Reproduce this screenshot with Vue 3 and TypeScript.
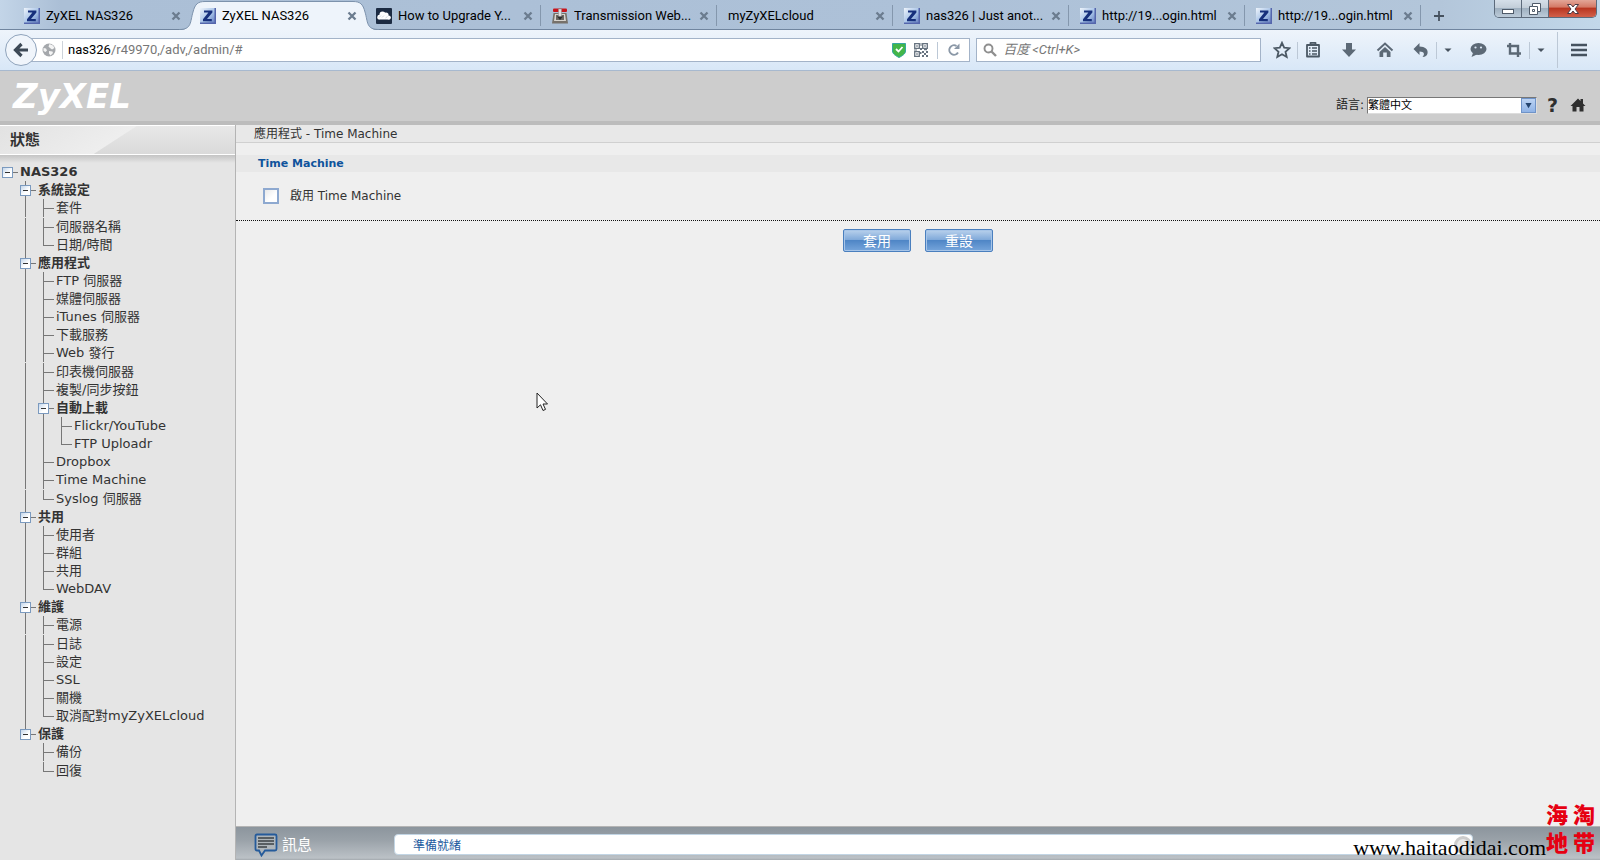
<script setup lang="ts">
import { ref } from 'vue'

interface Tab {
  title: string
  icon: 'z' | 'cloud' | 'transmission' | 'none'
  active?: boolean
}

interface TreeRow {
  label: string
  /** guide cells drawn before the label */
  cells: string[]
  spaced?: boolean
}

const tabs: Tab[] = [
  { title: 'ZyXEL NAS326', icon: 'z' },
  { title: 'ZyXEL NAS326', icon: 'z', active: true },
  { title: 'How to Upgrade Y...', icon: 'cloud' },
  { title: 'Transmission Web...', icon: 'transmission' },
  { title: 'myZyXELcloud', icon: 'none' },
  { title: 'nas326 | Just anot...', icon: 'z' },
  { title: 'http://19...ogin.html', icon: 'z' },
  { title: 'http://19...ogin.html', icon: 'z' },
]

const B = 'blank'
const V = 'line'
const T = 'tee'
const L = 'elbow'

const tree: TreeRow[] = [
  { label: 'NAS326', cells: ['box'] },
  { label: '系統設定', cells: [B, 'box through'] },
  { label: '套件', cells: [B, V, T] },
  { label: '伺服器名稱', cells: [B, V, T], spaced: true },
  { label: '日期/時間', cells: [B, V, L] },
  { label: '應用程式', cells: [B, 'box through'] },
  { label: 'FTP 伺服器', cells: [B, V, T] },
  { label: '媒體伺服器', cells: [B, V, T] },
  { label: 'iTunes 伺服器', cells: [B, V, T] },
  { label: '下載服務', cells: [B, V, T] },
  { label: 'Web 發行', cells: [B, V, T] },
  { label: '印表機伺服器', cells: [B, V, T], spaced: true },
  { label: '複製/同步按鈕', cells: [B, V, T] },
  { label: '自動上載', cells: [B, V, 'box through'] },
  { label: 'Flickr/YouTube', cells: [B, V, V, T] },
  { label: 'FTP Uploadr', cells: [B, V, V, L] },
  { label: 'Dropbox', cells: [B, V, T] },
  { label: 'Time Machine', cells: [B, V, T] },
  { label: 'Syslog 伺服器', cells: [B, V, L], spaced: true },
  { label: '共用', cells: [B, 'box through'] },
  { label: '使用者', cells: [B, V, T] },
  { label: '群組', cells: [B, V, T] },
  { label: '共用', cells: [B, V, T] },
  { label: 'WebDAV', cells: [B, V, L] },
  { label: '維護', cells: [B, 'box through'] },
  { label: '電源', cells: [B, V, T] },
  { label: '日誌', cells: [B, V, T], spaced: true },
  { label: '設定', cells: [B, V, T] },
  { label: 'SSL', cells: [B, V, T] },
  { label: '關機', cells: [B, V, T] },
  { label: '取消配對myZyXELcloud', cells: [B, V, L] },
  { label: '保護', cells: [B, 'box end'] },
  { label: '備份', cells: [B, B, T] },
  { label: '回復', cells: [B, B, L], spaced: true },
]

const isBranch = (row: TreeRow): boolean => row.cells[row.cells.length - 1].startsWith('box')

const address = ref('nas326/r49970,/adv,/admin/#')
const search = ref('')
const language = ref('zh-TW')
const enabled = ref(false)
</script>

<template>
  <div class="window">
    <header class="chrome">
      <div class="tabstrip">
        <div v-for="(tab, i) in tabs" :key="i" class="tab" :class="{ active: tab.active, ruled: i > 1 }">
          <svg v-if="tab.active" class="shape" viewBox="0 0 200 30" preserveAspectRatio="none" aria-hidden="true">
            <path d="M0 30C13 30 11 22 14 12C16 4 19 1.500 26 1.500H174C181 1.500 184 4 186 12C189 22 187 30 200 30Z" fill="#eef4fb" />
            <path d="M0 29.500C13 29.500 11 22 14 12C16 4 19 1.500 26 1.500H174C181 1.500 184 4 186 12C189 22 187 29.500 200 29.500" fill="none" stroke="#7c92ac" />
          </svg>
          <svg v-if="tab.icon === 'z'" class="favicon" viewBox="0 0 16 16" aria-hidden="true">
            <defs>
              <linearGradient :id="'z' + i" x1="0" y1="0" x2="1" y2="1">
                <stop offset="0" stop-color="#eef4fb" />
                <stop offset="0.550" stop-color="#a3c0e6" />
                <stop offset="1" stop-color="#5a70b8" />
              </linearGradient>
            </defs>
            <rect width="16" height="16" :fill="`url(#z${i})`" />
            <path d="M0 16V14.500H14.500V0H16V16Z" fill="#5566ac" />
            <path d="M4 2.400H12.400V4.400L7 11H11.800V13.200H3V11.200L8.400 4.600H4Z" fill="#17307c" />
          </svg>
          <svg v-else-if="tab.icon === 'cloud'" class="favicon" viewBox="0 0 16 16" aria-hidden="true">
            <rect width="16" height="16" rx="1" fill="#1c2b42" />
            <g fill="#fff"><circle cx="3.500" cy="9" r="2.200" /><circle cx="6.500" cy="6.500" r="3" /><circle cx="10" cy="7" r="2.600" /><circle cx="12.800" cy="9.500" r="1.900" /><rect x="1.500" y="8" width="13" height="3.500" rx="1.500" /></g>
            <path d="M3 9.500L5 7.500M6 9.500L8 7.500M9.500 10L11.500 8.500" stroke="#b3bfcb" stroke-width="0.600" />
          </svg>
          <svg v-else-if="tab.icon === 'transmission'" class="favicon" viewBox="0 0 16 16" aria-hidden="true">
            <path d="M1.500 5H14.500L16 15.500H0Z" fill="#77716a" />
            <path d="M3 6H13L14 13H2Z" fill="#d8d5cf" />
            <path d="M4 7H12V12H4Z" fill="#6c6862" />
            <rect x="1" y="0.500" width="14" height="3.500" rx="1" fill="#c8141b" />
            <path d="M6.500 1H9.500V9H6.500Z" fill="#dedede" stroke="#8b8b8b" stroke-width="0.500" />
            <path d="M5 8.500H11L8 12Z" fill="#2c2c2c" />
          </svg>
          <span class="tab-title">{{ tab.title }}</span>
          <button class="tab-close" type="button" :aria-label="'Close ' + tab.title">
            <svg viewBox="0 0 10 10" aria-hidden="true"><path d="M1.500 1.500L8.500 8.500M8.500 1.500L1.500 8.500" stroke="#6b7c8f" stroke-width="2.300" /></svg>
          </button>
        </div>
        <button class="new-tab" type="button" aria-label="New tab">
          <svg viewBox="0 0 12 12" aria-hidden="true"><path d="M6 1V11M1 6H11" stroke="#46525f" stroke-width="1.800" /></svg>
        </button>
        <div class="window-controls">
          <button type="button" class="win" aria-label="Minimize">
            <svg viewBox="0 0 14 14" aria-hidden="true"><rect x="1.500" y="7.500" width="11" height="4" fill="#fff" stroke="#4e5a69" /></svg>
          </button>
          <button type="button" class="win" aria-label="Restore">
            <svg viewBox="0 0 14 14" aria-hidden="true"><path d="M4.500 1.500H12.500V9.500H9.500V12.500H1.500V4.500H4.500Z" fill="#fff" stroke="#4e5a69" /><path d="M4.500 4.500H9.500V9.500M4.500 7.500H6.500V9.500H4.500Z" fill="none" stroke="#4e5a69" /></svg>
          </button>
          <button type="button" class="win close" aria-label="Close window">
            <svg viewBox="0 0 14 14" aria-hidden="true"><path d="M1.500 2.500H5L7 5L9 2.500H12.500L9 7L12.500 11.500H9L7 9L5 11.500H1.500L5 7Z" fill="#fff" stroke="#4c3a44" /></svg>
          </button>
        </div>
      </div>

      <div class="toolbar">
        <button class="back" type="button" aria-label="Back">
          <svg viewBox="0 0 16 16" aria-hidden="true"><path d="M8.500 2L2.500 8L8.500 14M2.500 8H15" fill="none" stroke="#3d4956" stroke-width="3.200" /></svg>
        </button>
        <div class="address">
          <svg class="globe" viewBox="0 0 14 14" aria-hidden="true">
            <circle cx="7" cy="7" r="6.500" fill="#a5a8ac" />
            <path d="M7.500 1L11 2.500L12.500 5L10 6.500L8 5L6.500 3.500ZM1.500 5L4 5.500L5 7.500L3.500 9L1.500 8ZM7 8L10.500 8.500L11 10L8.500 12.500L7 10.500Z" fill="#f4f4f4" />
          </svg>
          <div class="address-text">
            <span class="address-show" aria-hidden="true"><b>nas326</b>/r49970,/adv,/admin/#</span>
            <input v-model="address" class="address-input" type="text" aria-label="Address" />
          </div>
          <svg class="shield" viewBox="0 0 14 16" aria-hidden="true"><path d="M0.500 1.500H13.500V9C13.500 12 10 14 7 15.500C4 14 0.500 12 0.500 9Z" fill="#43b649" stroke="#35a7a2" /><path d="M4 7L6.500 9.500L10.500 5" fill="none" stroke="#fff" stroke-width="1.800" /></svg>
          <svg class="qr" viewBox="0 0 14 14" aria-hidden="true">
            <path d="M0.700 0.700H5.300V5.300H0.700ZM8.700 0.700H13.300V5.300H8.700ZM0.700 8.700H5.300V13.300H0.700Z" fill="none" stroke="#66727f" stroke-width="1.300" />
            <path d="M2.300 2.300h1.400v1.400H2.300ZM10.300 2.300h1.400v1.400h-1.400ZM2.300 10.300h1.400v1.400H2.300ZM6.500 0h1v3h-1ZM6 5h2v2H6ZM0 6.500h3v1H0ZM8 8h2v2H8ZM10 10h2v2h-2ZM12 8h2v2h-2ZM12 12h2v2h-2ZM8 12h2v2H8ZM6 9h1.500v2H6ZM10 6h3v1.300h-3Z" fill="#66727f" />
          </svg>
          <span class="bar-rule"></span>
          <button class="plain" type="button" aria-label="Reload">
            <svg viewBox="0 0 14 14" aria-hidden="true"><path d="M11 9.500A4.700 4.700 0 1 1 9.500 3" fill="none" stroke="#8b98a7" stroke-width="2" /><path d="M12.500 0.500V6H7Z" fill="#8b98a7" /></svg>
          </button>
        </div>
        <div class="search">
          <svg viewBox="0 0 14 14" aria-hidden="true"><circle cx="5.500" cy="5.500" r="4" fill="none" stroke="#8f8f8f" stroke-width="1.900" /><path d="M8.500 8.500L13 13" stroke="#8f8f8f" stroke-width="2.400" /></svg>
          <input v-model="search" type="text" aria-label="Search" placeholder="百度 <Ctrl+K>" />
        </div>
        <nav class="actions" aria-label="Browser tools">
          <button class="tool" type="button" aria-label="Bookmark">
            <svg viewBox="0 0 18 18" aria-hidden="true"><path d="M9 1.800L11.200 6.700L16.500 7.200L12.500 10.800L13.700 16L9 13.300L4.300 16L5.500 10.800L1.500 7.200L6.800 6.700Z" fill="none" stroke="#4b5864" stroke-width="1.800" /></svg>
          </button>
          <span class="bar-rule"></span>
          <button class="tool list" type="button" aria-label="Bookmarks list">
            <svg viewBox="0 0 18 18" aria-hidden="true"><path d="M3 4H15V15.500H3ZM6.500 4V1.800H11.500V4" fill="none" stroke="#4b5864" stroke-width="1.800" stroke-linejoin="round" /><path d="M5 7H6.500M8 7H13M5 10H6.500M8 10H13M5 13H6.500M8 13H13" stroke="#4b5864" stroke-width="1.500" /></svg>
          </button>
          <button class="tool down" type="button" aria-label="Downloads">
            <svg viewBox="0 0 18 18" aria-hidden="true"><path d="M6 2H12V8.500H16L9 16L2 8.500H6Z" fill="#5c6976" /></svg>
          </button>
          <button class="tool house" type="button" aria-label="Home">
            <svg viewBox="0 0 18 18" aria-hidden="true"><path d="M1.500 9.500L9 2.500L16.500 9.500" fill="none" stroke="#5c6976" stroke-width="2" /><path d="M9 6L14.500 11V16H10.800V11.500H7.200V16H3.500V11Z" fill="#5c6976" /></svg>
          </button>
          <button class="tool undo" type="button" aria-label="Undo">
            <svg viewBox="0 0 18 18" aria-hidden="true"><path d="M7.500 2V5.500C13 5.500 16.500 8.500 15.500 12.500C15 14.500 13.500 16 10.500 16C13 13.500 12.500 10.500 7.500 10.500V14L1.500 8Z" fill="#5c6976" /></svg>
          </button>
          <span class="bar-rule"></span>
          <button class="caret" type="button" aria-label="Undo history"><svg viewBox="0 0 8 8" aria-hidden="true"><path d="M0.500 2.500H7.500L4 6Z" fill="#46525f" /></svg></button>
          <button class="tool chat" type="button" aria-label="Chat">
            <svg viewBox="0 0 18 18" aria-hidden="true"><ellipse cx="9.500" cy="8" rx="8" ry="6" fill="#5c6976" /><path d="M4 12L2.500 16L9 13Z" fill="#5c6976" /><circle cx="6.500" cy="6.500" r="1.100" fill="#dce8f5" /><circle cx="12" cy="6.500" r="1.100" fill="#dce8f5" /></svg>
          </button>
          <button class="tool crop" type="button" aria-label="Screenshot">
            <svg viewBox="0 0 18 18" aria-hidden="true"><path d="M5 2V12.500H16M2 5H13V16" fill="none" stroke="#5c6976" stroke-width="2.400" /></svg>
          </button>
          <span class="bar-rule"></span>
          <button class="caret" type="button" aria-label="Screenshot options"><svg viewBox="0 0 8 8" aria-hidden="true"><path d="M0.500 2.500H7.500L4 6Z" fill="#46525f" /></svg></button>
          <span class="bar-rule tall"></span>
          <button class="tool menu" type="button" aria-label="Menu">
            <svg viewBox="0 0 18 18" aria-hidden="true"><path d="M1 4H17M1 9H17M1 14H17" stroke="#46525f" stroke-width="2.600" /></svg>
          </button>
        </nav>
      </div>
    </header>

    <div class="brandbar">
      <strong class="brand">ZyXEL</strong>
      <div class="brand-tools">
        <label for="lang">語言:</label>
        <span class="select">
          <select id="lang" v-model="language">
            <option value="zh-TW">繁體中文</option>
          </select>
          <span class="drop" aria-hidden="true"><svg viewBox="0 0 8 8"><path d="M0.500 1H7.500L4 7Z" fill="#24446f" /></svg></span>
        </span>
        <button class="plain help" type="button" aria-label="Help">?</button>
        <button class="plain home" type="button" aria-label="Home">
          <svg viewBox="0 0 16 14" aria-hidden="true"><path d="M8 0.500L10.500 3V1H13V5.500L15.500 8H13.500V13.500H9.500V9H6.500V13.500H2.500V8H0.500Z" fill="#2f2f2f" /></svg>
        </button>
      </div>
    </div>

    <div class="body">
      <aside class="sidebar">
        <h2 class="side-title">狀態</h2>
        <div class="side-shadow"></div>
        <ul class="tree">
          <li v-for="(row, i) in tree" :key="i" :class="{ spaced: row.spaced }">
            <template v-for="(cell, j) in row.cells" :key="j">
              <span v-if="cell.startsWith('box')" class="cell" :class="cell">
                <button type="button" class="toggle" :aria-label="'Collapse ' + row.label"></button>
              </span>
              <span v-else class="cell" :class="cell"></span>
            </template>
            <a href="#" :class="{ branch: isBranch(row) }">{{ row.label }}</a>
          </li>
        </ul>
      </aside>

      <div class="content">
        <h1 class="crumb">應用程式 - Time Machine</h1>
        <main class="panel">
          <h3 class="section">Time Machine</h3>
          <div class="option">
            <input id="enable" v-model="enabled" type="checkbox" />
            <label for="enable">啟用 Time Machine</label>
          </div>
          <div class="buttons">
            <button type="button">套用</button>
            <button type="button">重設</button>
          </div>
          <svg class="pointer" viewBox="0 0 12 20" aria-hidden="true"><path d="M1 1V16L4.500 12.800L7 18.500L9.500 17.400L7 12H11.500Z" fill="#fff" stroke="#222" /></svg>
        </main>
        <footer class="status">
          <svg class="bubble" viewBox="0 0 24 24" aria-hidden="true">
            <path d="M3 1.500H21Q22.500 1.500 22.500 3V16Q22.500 17.500 21 17.500H11L7.500 22.500L5 17.500H3Q1.500 17.500 1.500 16V3Q1.500 1.500 3 1.500Z" fill="#aeb5ba" stroke="#255b9b" stroke-width="1.800" />
            <path d="M4 5H20M4 8H20M4 11H20M4 14H13" stroke="#3d4145" stroke-width="1.400" />
          </svg>
          <span class="status-title">訊息</span>
          <output class="message">準備就緒<span class="spinner"></span></output>
        </footer>
      </div>
    </div>

    <div class="watermark">
      <span class="site">www.haitaodidai.com</span>
      <span class="seal"><span>海</span><span>淘</span><span>地</span><span>带</span></span>
    </div>
  </div>
</template>

<style>
html,
body,
#app {
  height: 100%;
}
</style>

<style scoped>
.window {
  position: relative;
  display: flex;
  flex-direction: column;
  min-height: 100%;
  overflow: hidden;
  background: #efefef;
  color: #333;
  font: 13px/18px 'DejaVu Sans', 'Noto Sans CJK TC', sans-serif;
}
* {
  box-sizing: border-box;
}
button,
input,
select {
  margin: 0;
  padding: 0;
  border: 0;
  background: none;
  color: inherit;
  font: inherit;
}
svg {
  display: block;
}

/* browser chrome */
.chrome {
  font: 13px/18px Roboto, 'Noto Sans CJK SC', sans-serif;
  color: #000;
}
.tabstrip {
  display: flex;
  align-items: stretch;
  height: 30px;
  padding-left: 14px;
  background: linear-gradient(90deg, #c3d5e8 0, #abbfd6 60px, #adc1d8 60%, #b3c6da 90%, #c2d8ea 100%);
  box-shadow: inset 0 -1px #70859f;
}
.tab {
  position: relative;
  display: flex;
  flex: 0 1 176px;
  align-items: center;
  gap: 6px;
  min-width: 0;
  padding: 1px 9px 0 10px;
}
.tab.ruled::before {
  content: '';
  position: absolute;
  top: 5px;
  right: 1px;
  width: 1px;
  height: 21px;
  background: #8497ad;
}
.shape {
  position: absolute;
  top: 0;
  left: -11px;
  width: 200px;
  height: 30px;
}
.favicon {
  position: relative;
  flex: none;
  width: 16px;
  height: 16px;
}
.tab-title {
  position: relative;
  flex: 1;
  overflow: hidden;
  white-space: nowrap;
}
.tab-close {
  position: relative;
  flex: none;
  width: 10px;
  height: 10px;
}
.new-tab {
  width: 12px;
  height: 12px;
  margin: 10px 0 0 11px;
}
.window-controls {
  display: flex;
  height: 18px;
  margin-left: auto;
  margin-right: 3px;
  overflow: hidden;
  border: 1px solid #5c6a7b;
  border-top: 0;
  border-radius: 0 0 5px 5px;
}
.win {
  display: grid;
  place-items: center;
  width: 27px;
  border-right: 1px solid #5c6a7b;
  background: linear-gradient(#d5dfe9 0, #c3ced9 45%, #9fb0c0 50%, #bccbd9 100%);
}
.win svg {
  width: 14px;
  height: 14px;
}
.win.close {
  width: 47px;
  border-right: 0;
  background: linear-gradient(#e3a698 0, #d57b68 40%, #b93722 50%, #d2604a 100%);
}
.toolbar {
  display: flex;
  align-items: center;
  height: 41px;
  padding: 0 12px 0 5px;
  border-bottom: 1px solid #a7b9cf;
  background: linear-gradient(#eef4fb, #d8e7f7);
}
.back {
  position: relative;
  display: grid;
  place-items: center;
  flex: none;
  width: 32px;
  height: 32px;
  border: 1px solid #8fa3bb;
  border-radius: 50%;
  background: #f0f5fb;
}
.back svg {
  width: 16px;
  height: 16px;
}
.address,
.search {
  display: flex;
  align-items: center;
  height: 24px;
  border: 1px solid #a3b3c8;
  background: #fff;
}
.address {
  flex: 943 1 0;
  margin-left: -6px;
  padding: 0 8px 0 10px;
}
.globe {
  width: 14px;
  height: 14px;
}
.address-text {
  position: relative;
  flex: 1;
  height: 18px;
  margin-left: 6px;
  padding-left: 5px;
  border-left: 1px solid #cdd3da;
}
.address-show {
  color: #777;
  pointer-events: none;
}
.address-show b {
  color: #000;
  font-weight: 400;
}
.address-input {
  position: absolute;
  inset: 0;
  width: 100%;
  padding-left: 5px;
  color: transparent;
  caret-color: #000;
}
.shield {
  width: 14px;
  height: 16px;
}
.qr {
  width: 14px;
  height: 14px;
  margin: 0 9px 0 8px;
}
.bar-rule {
  flex: none;
  width: 1px;
  height: 17px;
  background: #bcc8d6;
}
.bar-rule.tall {
  height: 36px;
}
.plain {
  flex: none;
}
.address .plain {
  width: 14px;
  height: 14px;
  margin-left: 9px;
}
.search {
  flex: 284 1 0;
  gap: 6px;
  margin-left: 6px;
  padding-left: 6px;
}
.search svg {
  flex: none;
  width: 14px;
  height: 14px;
}
.search input {
  flex: 1;
  min-width: 0;
  font-style: italic;
}
.search input::placeholder {
  color: #777;
  opacity: 1;
}
.actions {
  display: flex;
  align-items: center;
  margin-left: 12px;
}
.tool,
.tool svg {
  flex: none;
  width: 18px;
  height: 18px;
}
.actions .list {
  margin-left: 6px;
}
.actions .bar-rule {
  margin-left: 6px;
}
.actions .down,
.actions .house,
.actions .undo {
  margin-left: 18px;
}
.caret {
  width: 8px;
  height: 8px;
  margin-left: 7px;
}
.actions .chat {
  margin-left: 17px;
}
.actions .crop {
  margin-left: 18px;
}
.actions .tall {
  margin-left: 12px;
}
.actions .menu {
  margin-left: 12px;
}

/* device header */
.brandbar {
  display: flex;
  justify-content: space-between;
  height: 54px;
  padding: 0 14px 0 13px;
  border-bottom: 4px solid #bcbcbc;
  background: #cdcdcd;
}
.brand {
  color: #fff;
  font: italic 700 34px/50px 'DejaVu Sans', sans-serif;
}
.brand-tools {
  display: flex;
  align-items: center;
  padding-top: 18px;
  color: #222;
  font-size: 12px;
}
.select {
  position: relative;
  width: 170px;
  height: 17px;
  margin-left: 3px;
  border: 1px solid #777;
  border-right-color: #ddd;
  border-bottom-color: #ddd;
  background: #fff;
}
.select select {
  display: block;
  width: 100%;
  height: 15px;
  appearance: none;
  color: #000;
  font-size: 11px;
  line-height: 15px;
}
.drop {
  position: absolute;
  top: 0;
  right: 0;
  display: grid;
  place-items: center;
  width: 15px;
  height: 15px;
  border: 1px solid #6f93c8;
  background: linear-gradient(#bcd3f3, #8fb3e6);
  pointer-events: none;
}
.drop svg {
  width: 7px;
  height: 7px;
}
.help {
  margin-left: 10px;
  color: #2f2f2f;
  font: 700 19px/18px 'DejaVu Sans', sans-serif;
}
.home {
  width: 16px;
  height: 14px;
  margin-left: 12px;
}

/* navigation */
.body {
  display: flex;
  flex: 1;
}
.sidebar {
  flex: none;
  width: 236px;
  border-right: 1px solid #b4b4b4;
  background: #e5e5e5;
}
.side-title {
  height: 30px;
  margin: 0;
  padding-left: 10px;
  border-top: 1px solid #fff;
  border-bottom: 1px solid #fff;
  background: linear-gradient(147deg, #e2e2e2 0, #eee 74px, rgba(238, 238, 238, 0) 75px), linear-gradient(#e8e8e8, #dadada);
  font: 700 15px/29px 'DejaVu Sans', 'Noto Sans CJK TC', sans-serif;
}
.side-shadow {
  height: 8px;
  background: linear-gradient(#c4c4c4, #e5e5e5);
}
.tree {
  margin: 0;
  padding: 0;
  list-style: none;
}
.tree li {
  display: flex;
  height: 18px;
}
.tree .spaced {
  margin-top: 1px;
}
.tree a {
  padding-left: 2px;
  color: #333;
  text-decoration: none;
  white-space: nowrap;
}
.tree .branch {
  font-weight: 700;
}
.cell {
  position: relative;
  flex: none;
  width: 18px;
}
.line::before,
.tee::before,
.elbow::before,
.through::before,
.end::before {
  content: '';
  position: absolute;
  top: 0;
  bottom: 0;
  left: 7px;
  width: 1px;
  background: #777;
}
.elbow::before,
.end::before {
  bottom: 9px;
}
.tee::after,
.elbow::after,
.box::after {
  content: '';
  position: absolute;
  top: 9px;
  left: 7px;
  right: 0;
  height: 1px;
  background: #777;
}
.toggle {
  position: absolute;
  z-index: 1;
  top: 4px;
  left: 2px;
  width: 11px;
  height: 11px;
  border: 1px solid #7b9abf;
  background: linear-gradient(#333, #333) center / 5px 1px no-repeat, linear-gradient(135deg, #c4d6ea, #fff 60%);
}

/* content */
.content {
  display: flex;
  flex: 1;
  flex-direction: column;
  min-width: 0;
}
.crumb {
  height: 18px;
  margin: 0;
  padding-left: 18px;
  border-bottom: 1px solid #d0d0d0;
  background: #e8e8e8;
  font: 12px/18px 'DejaVu Sans', 'Noto Sans CJK TC', sans-serif;
}
.panel {
  position: relative;
  flex: 1;
  padding-top: 12px;
}
.section {
  margin: 0;
  padding-left: 22px;
  background: #e8e8e8;
  color: #0f539c;
  font: 700 11px/17px 'DejaVu Sans', sans-serif;
}
.option {
  display: flex;
  align-items: center;
  gap: 11px;
  height: 49px;
  padding-left: 27px;
  border-bottom: 1px dotted #111;
  font-size: 12px;
}
.option input {
  width: 16px;
  height: 16px;
  appearance: none;
  border: 2px solid #8ea9d0;
  background: linear-gradient(135deg, #e9e9e9, #fff 60%);
}
.buttons {
  display: flex;
  justify-content: center;
  gap: 14px;
  padding-top: 8px;
}
.buttons button {
  width: 68px;
  height: 23px;
  border: 1px solid #4a7fbe;
  border-radius: 2px;
  background: linear-gradient(#b9d1ec 0, #7ea8d9 48%, #4f86c6 50%, #76a5db 100%);
  box-shadow: inset 0 0 0 1px #a7c5e8;
  color: #fff;
  font-size: 14px;
}
.pointer {
  position: absolute;
  top: 249px;
  left: 300px;
  width: 12px;
  height: 20px;
}
.status {
  display: flex;
  align-items: center;
  height: 34px;
  padding: 2px 127px 0 18px;
  border-top: 1px solid #b4b4b4;
  background: linear-gradient(#8c959d, #9aa2a9 40%, #bbc1c6 94%, #a3a9ae);
}
.bubble {
  width: 24px;
  height: 24px;
}
.status-title {
  width: 112px;
  margin-left: 4px;
  color: #fff;
  font-size: 15px;
}
.message {
  position: relative;
  flex: 1;
  height: 21px;
  padding-left: 18px;
  border: 1px solid #c2d5e4;
  border-radius: 4px;
  background: #fff;
  color: #1c5a9e;
  font-size: 12px;
  line-height: 22px;
}
.spinner {
  position: absolute;
  right: 0;
  top: 1px;
  width: 18px;
  height: 18px;
  border: 3px solid #ccc;
  border-radius: 50%;
  background: #e8e8e8;
}
.watermark {
  position: absolute;
  right: 5px;
  bottom: 0;
  display: flex;
  align-items: flex-end;
  pointer-events: none;
}
.site {
  color: #000;
  font: 22px/24px 'Liberation Serif', serif;
}
.seal {
  display: grid;
  grid-template-columns: 22px 22px;
  column-gap: 5px;
  padding-bottom: 2px;
  color: #e60012;
  font: 900 22px/28px 'Liberation Serif', 'Noto Sans CJK SC', sans-serif;
}
</style>
